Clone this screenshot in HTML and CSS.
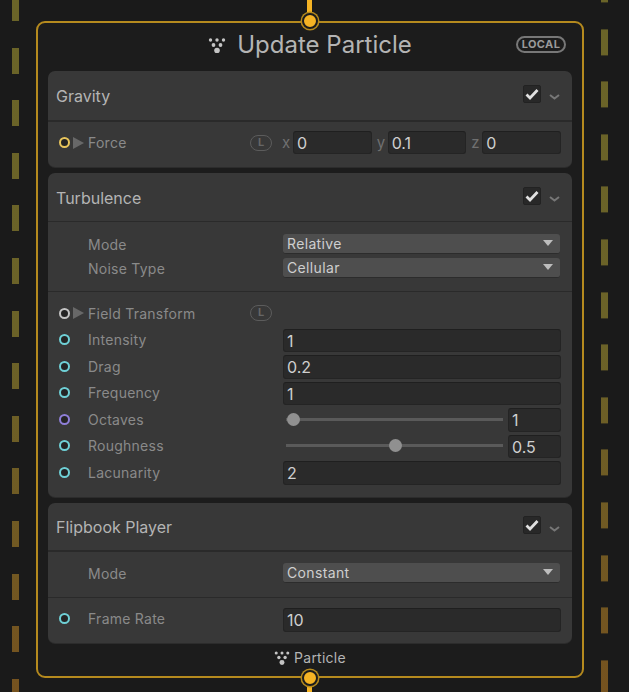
FILE: index.html
```html
<!DOCTYPE html>
<html lang="en">
<head>
    <meta charset="UTF-8">
    <meta name="viewport" content="width=device-width, initial-scale=1.0">
    <title>Update Particle</title>
    <link rel="stylesheet" href="styles.css">
</head>
<body>
    <!-- Edges running past the node -->
    <div class="edge edge-left"></div>
    <div class="edge edge-right"></div>
    <div class="flow flow-top"></div>
    <div class="flow flow-bottom"></div>

    <div class="node">
        <div class="flow-port flow-port-top"></div>
        <div class="flow-port flow-port-bottom"></div>

        <div class="node-title">
            <span></span>
            <div class="title-text">
                <svg class="particle-icon" width="18" height="16" viewBox="0 0 18 16"><circle cx="2.5" cy="3" r="1.7"/><circle cx="9" cy="3" r="1.7"/><circle cx="15.5" cy="3" r="1.7"/><circle cx="5.5" cy="8" r="1.9"/><circle cx="12.5" cy="8" r="1.9"/><circle cx="9" cy="13.5" r="2.8"/></svg>
                <span>Update Particle</span>
            </div>
            <div class="local-badge">LOCAL</div>
        </div>

        <!-- Gravity -->
        <div class="block">
            <div class="block-header block-header-gravity">
                <span class="block-name">Gravity</span>
                <div class="check"><svg width="14" height="12" viewBox="0 0 14 12"><path d="M1.5 6.5 L5 10 L12.5 2"/></svg></div>
                <svg class="chevron" width="11" height="6" viewBox="0 0 11 6"><path d="M1 1 L5.5 4.5 L10 1"/></svg>
            </div>
            <div class="section section-force">
                <div class="row">
                    <div class="row-label"><i class="port port-yellow"></i><i class="expand"></i>Force<i class="link-l">L</i></div>
                    <div class="vector">
                        <span class="axis">x</span><div class="field">0</div>
                        <span class="axis">y</span><div class="field">0.1</div>
                        <span class="axis">z</span><div class="field">0</div>
                    </div>
                </div>
            </div>
        </div>

        <!-- Turbulence -->
        <div class="block">
            <div class="block-header">
                <span class="block-name">Turbulence</span>
                <div class="check"><svg width="14" height="12" viewBox="0 0 14 12"><path d="M1.5 6.5 L5 10 L12.5 2"/></svg></div>
                <svg class="chevron" width="11" height="6" viewBox="0 0 11 6"><path d="M1 1 L5.5 4.5 L10 1"/></svg>
            </div>
            <div class="section section-settings">
                <div class="row row-setting">
                    <div class="row-label"><i class="port-gap"></i>Mode</div>
                    <div class="dropdown">Relative<i class="arrow"></i></div>
                </div>
                <div class="row row-setting">
                    <div class="row-label"><i class="port-gap"></i>Noise Type</div>
                    <div class="dropdown">Cellular<i class="arrow"></i></div>
                </div>
            </div>
            <div class="section section-props">
                <div class="row">
                    <div class="row-label"><i class="port port-white"></i><i class="expand"></i>Field Transform<i class="link-l">L</i></div>
                </div>
                <div class="row">
                    <div class="row-label"><i class="port port-cyan"></i><i class="port-gap-inner"></i>Intensity</div>
                    <div class="field">1</div>
                </div>
                <div class="row">
                    <div class="row-label"><i class="port port-cyan"></i><i class="port-gap-inner"></i>Drag</div>
                    <div class="field">0.2</div>
                </div>
                <div class="row">
                    <div class="row-label"><i class="port port-cyan"></i><i class="port-gap-inner"></i>Frequency</div>
                    <div class="field">1</div>
                </div>
                <div class="row">
                    <div class="row-label"><i class="port port-purple"></i><i class="port-gap-inner"></i>Octaves</div>
                    <div class="slider">
                        <div class="track"><i class="thumb thumb-min"></i></div>
                        <div class="field field-small">1</div>
                    </div>
                </div>
                <div class="row">
                    <div class="row-label"><i class="port port-cyan"></i><i class="port-gap-inner"></i>Roughness</div>
                    <div class="slider">
                        <div class="track"><i class="thumb thumb-mid"></i></div>
                        <div class="field field-small">0.5</div>
                    </div>
                </div>
                <div class="row">
                    <div class="row-label"><i class="port port-cyan"></i><i class="port-gap-inner"></i>Lacunarity</div>
                    <div class="field">2</div>
                </div>
            </div>
        </div>

        <!-- Flipbook Player -->
        <div class="block">
            <div class="block-header block-header-flipbook">
                <span class="block-name">Flipbook Player</span>
                <div class="check"><svg width="14" height="12" viewBox="0 0 14 12"><path d="M1.5 6.5 L5 10 L12.5 2"/></svg></div>
                <svg class="chevron" width="11" height="6" viewBox="0 0 11 6"><path d="M1 1 L5.5 4.5 L10 1"/></svg>
            </div>
            <div class="section section-mode">
                <div class="row row-setting">
                    <div class="row-label"><i class="port-gap"></i>Mode</div>
                    <div class="dropdown">Constant<i class="arrow"></i></div>
                </div>
            </div>
            <div class="section section-rate">
                <div class="row">
                    <div class="row-label"><i class="port port-cyan"></i><i class="port-gap-inner"></i>Frame Rate</div>
                    <div class="field">10</div>
                </div>
            </div>
        </div>

        <div class="node-footer">
            <svg class="particle-icon" width="16" height="15" viewBox="0 0 18 16"><circle cx="2.5" cy="3" r="1.7"/><circle cx="9" cy="3" r="1.7"/><circle cx="15.5" cy="3" r="1.7"/><circle cx="5.5" cy="8" r="1.9"/><circle cx="12.5" cy="8" r="1.9"/><circle cx="9" cy="13.5" r="2.8"/></svg>
            <span>Particle</span>
        </div>
    </div>
</body>
</html>
```

FILE: styles.css
```css
/* Node graph canvas */
* {
    box-sizing: border-box;
}

body {
    margin: 0;
    height: 692px;
    overflow: hidden;
    position: relative;
    background-color: #1a1a1a;
    font-family: Inter, "Liberation Sans", sans-serif;
}

/* Dashed edges: background colour gaps laid over a colour fade */
.edge {
    position: absolute;
    top: 0;
    width: 7px;
    height: 692px;
}

.edge-left {
    left: 12px;
    background:
        repeating-linear-gradient(to bottom, transparent 0, transparent 26px, #1a1a1a 26px, #1a1a1a 52.6px) 0 -5px,
        linear-gradient(to bottom, #6a6428, #6b6228 50%, #75521f);
}

.edge-right {
    left: 601px;
    background:
        repeating-linear-gradient(to bottom, transparent 0, transparent 26px, #1a1a1a 26px, #1a1a1a 52.6px) 0 -23.6px,
        linear-gradient(to bottom, #6a6428, #6b6228 50%, #75521f);
}

.flow {
    position: absolute;
    left: 307px;
    width: 5px;
    background: #f5b324;
}

.flow-top {
    top: 0;
    height: 20px;
}

.flow-bottom {
    top: 680px;
    height: 12px;
}

.node {
    position: absolute;
    left: 36px;
    top: 21px;
    width: 548px;
    height: 657px;
    padding: 0 10px;
    background: #1c1c1c;
    border: 2px solid #b58a1e;
    border-radius: 9px;
    display: flex;
    flex-direction: column;
}

.flow-port {
    position: absolute;
    left: 264px;
    width: 16px;
    height: 16px;
    border-radius: 50%;
    background: #f5b324;
    border: 2px solid #1c1c1c;
    box-shadow: 0 0 0 1.5px #b58a1e;
}

.flow-port-top {
    top: -10px;
}

.flow-port-bottom {
    bottom: -10px;
}

.node-title {
    height: 48px;
    flex-shrink: 0;
    display: grid;
    grid-template-columns: 1fr auto 1fr;
    align-items: center;
    padding-bottom: 5px;
}

.title-text {
    display: flex;
    align-items: center;
    gap: 11px;
    font-size: 24px;
    color: #b4b4b4;
}

.particle-icon {
    fill: #c4c4c4;
}

.local-badge {
    justify-self: end;
    width: 50px;
    height: 17px;
    margin-right: 6px;
    border: 2px solid #777;
    border-radius: 9px;
    color: #9a9a9a;
    font-size: 11px;
    font-weight: 700;
    letter-spacing: 0.4px;
    line-height: 13px;
    text-align: center;
}

.block {
    background: #383838;
    border-radius: 7px;
    margin-bottom: 6px;
    box-shadow: 0 1px 0 #2c2c2c;
}

.block-header {
    height: 48px;
    display: flex;
    align-items: center;
    padding: 1px 12px 0 8px;
}

.block-header-gravity {
    height: 49px;
    padding-top: 0;
}

.block-header-flipbook {
    height: 47px;
}

.block-name {
    flex: 1;
    font-size: 16px;
    color: #b4b4b4;
}

.check {
    width: 18px;
    height: 18px;
    margin-top: -4px;
    background: #282828;
    border: 1px solid #222;
    border-radius: 2px;
    display: flex;
    align-items: center;
    justify-content: center;
}

.check path {
    fill: none;
    stroke: #e0e0e0;
    stroke-width: 2.8;
}

.chevron {
    margin-left: 8px;
    margin-top: 3px;
}

.chevron path {
    fill: none;
    stroke: #777;
    stroke-width: 2;
}

.section {
    border-top: 1px solid #2a2a2a;
}

.section-force {
    height: 47px;
    border-top: 2px solid #2a2a2a;
    padding-top: 6px;
}

.section-settings {
    height: 70px;
    padding-top: 10px;
}

.section-props {
    height: 206px;
    padding-top: 8px;
}

.section-mode {
    height: 47px;
    border-top: 2px solid #2a2a2a;
    padding-top: 9px;
}

.section-rate {
    height: 46px;
    padding-top: 8px;
}

.section-rate .row-label {
    margin-top: -2px;
}

.row {
    height: 26.5px;
    display: grid;
    grid-template-columns: 235px 1fr;
    align-items: center;
    padding-right: 11px;
}

.row-setting {
    height: 24px;
    padding-right: 12px;
}

.row-label {
    display: flex;
    align-items: center;
    position: relative;
    font-size: 14px;
    letter-spacing: 0.25px;
    color: #8a8a8a;
}

.port {
    width: 11px;
    height: 11px;
    margin-left: 11px;
    border-radius: 50%;
    border: 2px solid #6fd0d6;
    background: #242424;
}

.port-yellow {
    border-color: #e8c55c;
}

.port-white {
    border-color: #c4c4c4;
}

.port-cyan {
    border-color: #6fd0d6;
}

.port-purple {
    border-color: #8f7fd8;
}

.port-gap {
    width: 40px;
}

.port-gap-inner {
    width: 18px;
}

.expand {
    width: 0;
    height: 0;
    margin: 0 4px 0 3px;
    border-left: 11px solid #686868;
    border-top: 6px solid transparent;
    border-bottom: 6px solid transparent;
}

.link-l {
    position: absolute;
    left: 202px;
    top: 50%;
    width: 22px;
    height: 16px;
    margin-top: -8px;
    border: 1.5px solid #5c5c5c;
    border-radius: 8px;
    color: #666;
    font-size: 11px;
    font-style: normal;
    font-weight: 700;
    letter-spacing: 0;
    line-height: 13px;
    text-align: center;
}

.field {
    height: 23.5px;
    margin-top: 1px;
    background: #2a2a2a;
    border: 1px solid #242424;
    border-top-color: #1f1f1f;
    border-radius: 3px;
    padding-left: 3px;
    font-size: 16px;
    line-height: 23px;
    color: #cfcfcf;
}

.field-small {
    width: 53px;
    flex-shrink: 0;
}

.section-force .row {
    position: relative;
    height: 29px;
}

.vector {
    position: absolute;
    display: flex;
    align-items: center;
    left: 234px;
    width: 279px;
}

.vector .field {
    flex: 1;
    margin-top: 0;
    margin-left: 4px;
    margin-right: 5px;
}

.vector .field:last-child {
    margin-right: 0;
}

.axis {
    width: 7px;
    font-size: 15px;
    color: #707070;
}

.dropdown {
    height: 20px;
    position: relative;
    background: #4e4e4e;
    border-bottom: 1px solid #2c2c2c;
    border-radius: 3px;
    padding-left: 4px;
    font-size: 14px;
    letter-spacing: 0.35px;
    line-height: 19px;
    color: #cfcfcf;
}

.arrow {
    position: absolute;
    right: 7px;
    top: 6px;
    width: 0;
    height: 0;
    border-top: 6px solid #bdbdbd;
    border-left: 5.5px solid transparent;
    border-right: 5.5px solid transparent;
}

.slider {
    display: flex;
    align-items: center;
    gap: 5px;
}

.track {
    flex: 1;
    height: 3px;
    margin-left: 3px;
    position: relative;
    background: #5a5a5a;
}

.thumb {
    position: absolute;
    top: -5px;
    width: 13px;
    height: 13px;
    border-radius: 50%;
    background: #909090;
}

.thumb-min {
    left: 1px;
}

.thumb-mid {
    left: 103px;
}

.node-footer {
    display: flex;
    align-items: center;
    justify-content: center;
    gap: 4px;
    font-size: 14px;
    letter-spacing: 0.25px;
    color: #b4b4b4;
}
```
